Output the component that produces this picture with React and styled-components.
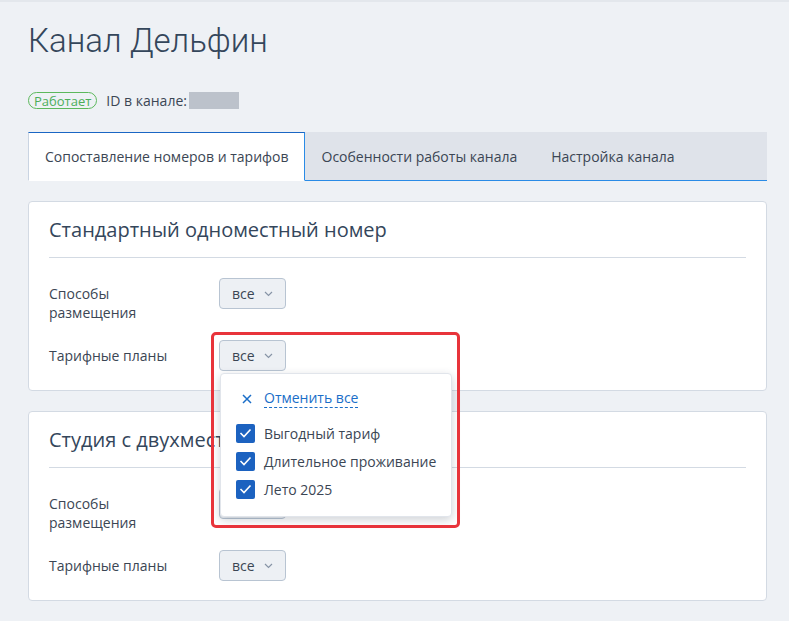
import styled, { createGlobalStyle } from 'styled-components';

const GlobalStyle = createGlobalStyle`
  html, body {
    margin: 0;
    padding: 0;
    background: #eef1f5;
  }
  body {
    font-family: "Open Sans", "Noto Sans", sans-serif;
    color: #3b4654;
  }
`;

const Page = styled.div`
  min-height: 621px;
  box-sizing: border-box;
  border-top: 2px solid #e3e7ec;
  padding: 17px 22px 20px 28px;
`;

const Title = styled.h1`
  margin: 0;
  font-family: Roboto, "Liberation Sans", sans-serif;
  font-weight: 300;
  font-size: 33px;
  line-height: 44px;
  color: #34465b;
`;

const StatusRow = styled.div`
  display: flex;
  align-items: center;
  gap: 9px;
  margin-top: 28px;
  font-size: 14px;
  color: #3b4654;
`;

const Badge = styled.span`
  display: inline-flex;
  align-items: center;
  height: 15px;
  padding: 0 5px;
  border: 1px solid #5cb85c;
  border-radius: 9px;
  color: #4cae5a;
  font-size: 13px;
`;

const IdValue = styled.span`
  display: inline-block;
  width: 50px;
  height: 17px;
  margin-left: -7px;
  background: #bcc2cb;
`;

const Tabs = styled.div`
  display: flex;
  margin-top: 22px;
  background: #dfe3ea;
  height: 49px;
  box-sizing: border-box;
`;

const Tab = styled.div`
  display: flex;
  align-items: center;
  padding: 0 17px;
  font-size: 14px;
  color: #3b4654;
  box-sizing: border-box;
  border-bottom: 1px solid #2a8be6;
  ${(p) => p.$active && `
    padding: 0 15px 0 16px;
    background: #fff;
    border: 1px solid #2a8be6;
    border-top-color: #1a66c4;
    border-bottom-color: #fff;
    border-left-color: #c9d4e2;
  `}
`;

const TabFill = styled.div`
  flex: 1;
  border-bottom: 1px solid #2a8be6;
`;

const Card = styled.section`
  margin-top: 20px;
  background: #fff;
  border: 1px solid #d3dae3;
  border-radius: 4px;
  padding: 0 20px 19px;
`;

const CardTitle = styled.h2`
  margin: 0;
  padding: 13px 0 12px;
  font-size: 20px;
  font-weight: 400;
  color: #34465b;
  border-bottom: 1px solid #d3dae3;
  line-height: 30px;
`;

const FieldRow = styled.div`
  display: grid;
  grid-template-columns: 170px auto;
  align-items: start;
  margin-top: ${(p) => p.$gap}px;
`;

const Label = styled.div`
  font-size: 14px;
  line-height: 19px;
  color: #3b4654;
  padding-top: 6px;
`;

const SelectWrap = styled.div`
  position: relative;
  justify-self: start;
`;

const SelectButton = styled.button`
  display: flex;
  align-items: center;
  gap: 9px;
  height: 31px;
  width: 67px;
  padding: 0 12px 0 12px;
  box-sizing: border-box;
  background: #edf0f4;
  border: 1px solid #b8c4d2;
  border-radius: 4px;
  font-family: "Open Sans", "Noto Sans", sans-serif;
  font-size: 14px;
  color: #3b4654;
`;

const Highlight = styled.div`
  position: absolute;
  left: -8px;
  top: -8px;
  width: 249px;
  height: 196px;
  box-sizing: border-box;
  border: 3px solid #e8343b;
  border-radius: 5px;
  z-index: 3;
  pointer-events: none;
`;

const Dropdown = styled.div`
  position: absolute;
  left: 1px;
  top: 33px;
  width: 232px;
  height: 144px;
  box-sizing: border-box;
  background: #fff;
  border: 1px solid #e1e5eb;
  border-radius: 4px;
  box-shadow: 0 3px 10px rgba(40, 55, 75, 0.22);
  padding: 15px 8px 0 15px;
  z-index: 2;
`;

const ClearRow = styled.div`
  display: flex;
  align-items: center;
  gap: 12px;
  padding-left: 6px;
  margin-bottom: 11px;
  font-size: 14px;
  line-height: 22px;
`;

const ClearLink = styled.span`
  color: #1a6ec8;
  border-bottom: 1px dashed #1a6ec8;
  line-height: 18px;
`;

const CheckRow = styled.label`
  display: flex;
  align-items: center;
  gap: 9px;
  height: 28px;
  font-size: 14px;
  white-space: nowrap;
  color: #3b4654;
`;

const Box = styled.span`
  display: inline-flex;
  flex-shrink: 0;
  align-items: center;
  justify-content: center;
  width: 19px;
  height: 19px;
  border-radius: 2px;
  background: #1c62c0;
`;

const Chevron = () => (
  <svg width="9" height="6" viewBox="0 0 9 6">
    <path d="M1 1l3.5 3.5L8 1" fill="none" stroke="#8794a6" strokeWidth="1.2" />
  </svg>
);

const Check = () => (
  <svg width="13" height="10" viewBox="0 0 13 10">
    <path d="M1.5 5l3.5 3.5L11.5 1.5" fill="none" stroke="#fff" strokeWidth="1.6" />
  </svg>
);

const Cross = () => (
  <svg width="10" height="10" viewBox="0 0 10 10">
    <path d="M1 1l8 8M9 1L1 9" stroke="#1a6ec8" strokeWidth="1.5" />
  </svg>
);

function Select({ children }) {
  return (
    <SelectWrap>
      <SelectButton type="button">
        все
        <Chevron />
      </SelectButton>
      {children}
    </SelectWrap>
  );
}

const tariffs = ['Выгодный тариф', 'Длительное проживание', 'Лето 2025'];

function RoomCard({ title, open }) {
  return (
    <Card>
      <CardTitle>{title}</CardTitle>
      <FieldRow $gap={20}>
        <Label>
          Способы
          <br />
          размещения
        </Label>
        <Select />
      </FieldRow>
      <FieldRow $gap={18}>
        <Label>Тарифные планы</Label>
        <Select>
          {open && (
            <>
              <Highlight />
              <Dropdown>
                <ClearRow>
                  <Cross />
                  <ClearLink>Отменить все</ClearLink>
                </ClearRow>
                {tariffs.map((t) => (
                  <CheckRow key={t}>
                    <Box>
                      <Check />
                    </Box>
                    {t}
                  </CheckRow>
                ))}
              </Dropdown>
            </>
          )}
        </Select>
      </FieldRow>
    </Card>
  );
}

export default function App() {
  return (
    <>
      <GlobalStyle />
      <Page>
        <Title>Канал Дельфин</Title>
        <StatusRow>
          <Badge>Работает</Badge>
          <span>ID в канале:</span>
          <IdValue />
        </StatusRow>
        <Tabs>
          <Tab $active>Сопоставление номеров и тарифов</Tab>
          <Tab>Особенности работы канала</Tab>
          <Tab>Настройка канала</Tab>
          <TabFill />
        </Tabs>
        <RoomCard title="Стандартный одноместный номер" open />
        <RoomCard title="Студия с двухместной кроватью" />
      </Page>
    </>
  );
}
